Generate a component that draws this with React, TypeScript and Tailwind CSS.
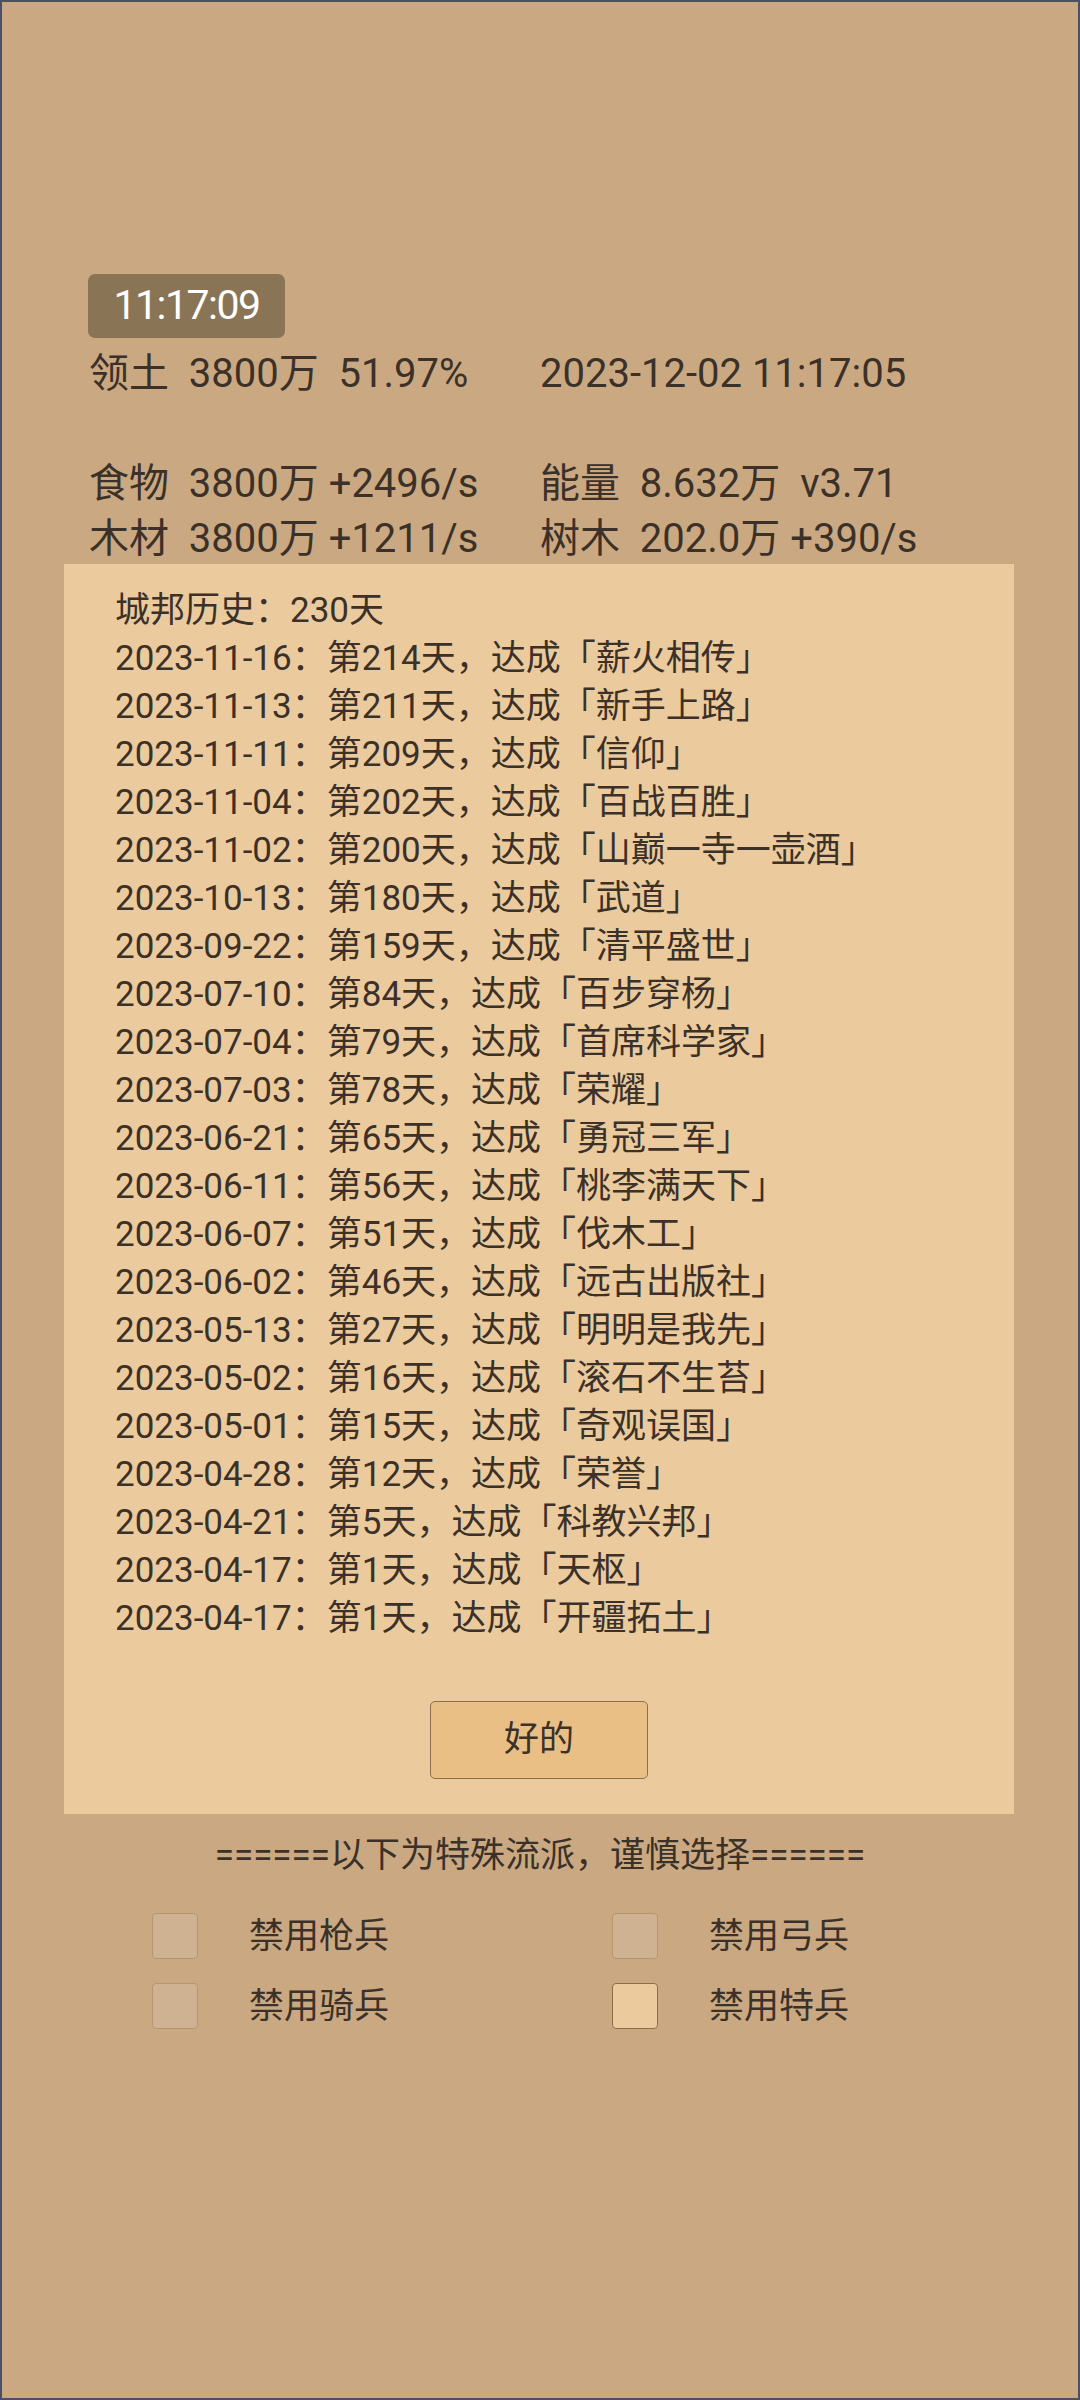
const history: [string, string, string][] = [
  ["2023-11-16", "第214天", "薪火相传"],
  ["2023-11-13", "第211天", "新手上路"],
  ["2023-11-11", "第209天", "信仰"],
  ["2023-11-04", "第202天", "百战百胜"],
  ["2023-11-02", "第200天", "山巅一寺一壶酒"],
  ["2023-10-13", "第180天", "武道"],
  ["2023-09-22", "第159天", "清平盛世"],
  ["2023-07-10", "第84天", "百步穿杨"],
  ["2023-07-04", "第79天", "首席科学家"],
  ["2023-07-03", "第78天", "荣耀"],
  ["2023-06-21", "第65天", "勇冠三军"],
  ["2023-06-11", "第56天", "桃李满天下"],
  ["2023-06-07", "第51天", "伐木工"],
  ["2023-06-02", "第46天", "远古出版社"],
  ["2023-05-13", "第27天", "明明是我先"],
  ["2023-05-02", "第16天", "滚石不生苔"],
  ["2023-05-01", "第15天", "奇观误国"],
  ["2023-04-28", "第12天", "荣誉"],
  ["2023-04-21", "第5天", "科教兴邦"],
  ["2023-04-17", "第1天", "天枢"],
  ["2023-04-17", "第1天", "开疆拓土"],
];

const options = [
  { label: "禁用枪兵", on: false },
  { label: "禁用弓兵", on: false },
  { label: "禁用骑兵", on: false },
  { label: "禁用特兵", on: true },
];

function Check({ label, on }: { label: string; on: boolean }) {
  return (
    <div className="flex items-center h-[46px]">
      <div
        className={
          on
            ? "w-[46px] h-[46px] rounded-[4px] border border-[#8d6e4a] bg-[#ebcb9e]"
            : "w-[46px] h-[46px] rounded-[4px] border border-[#b4966f] bg-[#cfb292]"
        }
      />
      <span className="ml-[51px] text-[35px] leading-[46px] mt-[2px]">{label}</span>
    </div>
  );
}

export default function App() {
  return (
    <div
      className="w-[1080px] h-[2400px] bg-[#caa982] border-2 border-[#4a5068] text-[#3b3129] overflow-hidden"
      style={{ fontFamily: "Roboto, 'Noto Sans CJK SC', sans-serif" }}
    >
      <div className="pt-[272px] pl-[86px]">
        <div className="w-[197px] h-[64px] rounded-[7px] bg-[#8a7456] flex items-center justify-center text-white text-[41px] tracking-[-1.5px]">
          11:17:09
        </div>
      </div>

      {/* stats */}
      <div className="grid grid-cols-[451px_451px] pl-[87px] mt-[8px] text-[40px] leading-[55px] whitespace-pre">
        <div>领土  3800万  51.97%</div>
        <div>2023-12-02 11:17:05</div>
        <div>&nbsp;</div>
        <div>&nbsp;</div>
        <div>食物  3800万 +2496/s</div>
        <div>能量  8.632万  v3.71</div>
        <div>木材  3800万 +1211/s</div>
        <div>树木  202.0万 +390/s</div>
      </div>

      {/* history panel */}
      <div className="ml-[62px] w-[950px] mt-[-2px] bg-[#ebcb9e] pt-[23px] pb-[35px] pl-[51px]">
        <div className="text-[35px] leading-[48px]">
          <div>城邦历史：230天</div>
          {history.map(([d, n, t], i) => (
            <div key={i}>
              {d}：{n}，达成「{t}」
            </div>
          ))}
        </div>
        <div className="flex justify-center mt-[58px] pr-[51px]">
          <button className="w-[218px] h-[78px] rounded-[5px] border border-[#8d6e4a] bg-[#e9bf86] text-[35px] text-[#3b3129]">
            好的
          </button>
        </div>
      </div>

      <div className="mt-[18px] text-center text-[35px] leading-[48px]">
        ======以下为特殊流派，谨慎选择======
      </div>

      <div className="grid grid-cols-[460px_460px] gap-y-[24px] ml-[150px] mt-[33px]">
        {options.map((o) => (
          <Check key={o.label} label={o.label} on={o.on} />
        ))}
      </div>
    </div>
  );
}
